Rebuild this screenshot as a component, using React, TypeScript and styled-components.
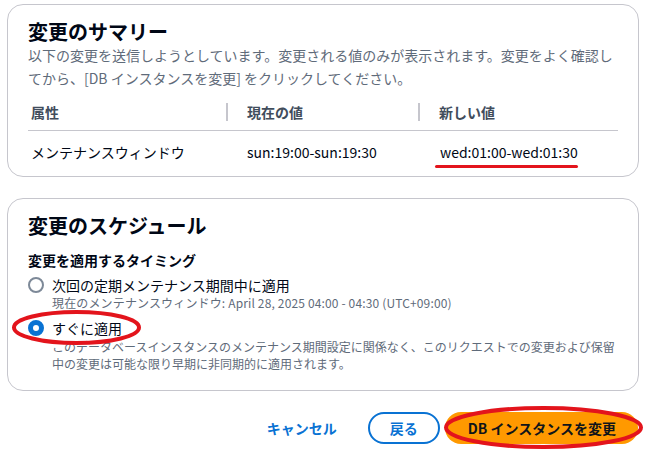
import React from "react";
import styled, { createGlobalStyle } from "styled-components";

const Global = createGlobalStyle`
  html, body { margin: 0; padding: 0; background: #ffffff; }
  body {
    font-family: "Noto Sans CJK JP", "Noto Sans", sans-serif;
    color: #000716;
    -webkit-font-smoothing: antialiased;
  }
`;

const Page = styled.div`
  width: 646px;
  height: 458px;
  box-sizing: border-box;
  padding: 4px 7px 0 7px;
  display: flex;
  flex-direction: column;
`;

const Card = styled.section<{ $gapTop?: number; $padBottom: number }>`
  border: 1px solid #c6c6cd;
  border-radius: 16px;
  padding: 14px 20px ${(p) => p.$padBottom}px 20px;
  margin-top: ${(p) => p.$gapTop ?? 0}px;
  background: #fff;
`;

const Title = styled.h2`
  margin: 0;
  font-size: 20px;
  line-height: 25px;
  font-weight: 700;
  color: #000716;
`;

const Desc = styled.p`
  margin: 0;
  font-size: 14px;
  line-height: 23px;
  color: #5f6b7a;
`;

const Table = styled.div`
  margin-top: 4px;
  display: grid;
  grid-template-columns: 198px 192px 1fr;
`;

const HeadCell = styled.div<{ $divider?: boolean }>`
  position: relative;
  height: 36px;
  display: flex;
  align-items: center;
  padding-left: ${(p) => (p.$divider ? 21 : 3)}px;
  font-size: 14px;
  font-weight: 700;
  color: #414d5c;
  border-bottom: 1px solid #c6c6cd;
  &::before {
    content: "";
    display: ${(p) => (p.$divider ? "block" : "none")};
    position: absolute;
    left: 0;
    top: 9px;
    width: 2px;
    height: 18px;
    background: #c6c6cd;
  }
`;

const Cell = styled.div<{ $indent: number }>`
  height: 42px;
  display: flex;
  align-items: center;
  padding-left: ${(p) => p.$indent}px;
  font-size: 14px;
  line-height: 20px;
  color: #000716;
`;

const Marked = styled.span`
  position: relative;
  display: inline-block;
`;

const Underline = styled.span`
  position: absolute;
  left: -5px;
  top: 23px;
  width: 143px;
  height: 3px;
  border-radius: 2px;
  background: #e3141c;
`;

const FieldLabel = styled.div`
  margin-top: 12px;
  font-size: 14px;
  line-height: 20px;
  font-weight: 700;
  color: #000716;
`;

const Options = styled.div`
  margin-top: 5px;
  display: flex;
  flex-direction: column;
`;

const Option = styled.div<{ $gapTop?: number }>`
  position: relative;
  display: grid;
  grid-template-columns: 24px 1fr;
  margin-top: ${(p) => p.$gapTop ?? 0}px;
`;

const RadioDot = styled.span<{ $checked?: boolean }>`
  margin-top: 2px;
  width: 16px;
  height: 16px;
  box-sizing: border-box;
  border-radius: 50%;
  border: ${(p) => (p.$checked ? "5px solid #0972d3" : "2px solid #7d8998")};
  background: #fff;
`;

const OptionText = styled.div`
  display: flex;
  flex-direction: column;
`;

const OptionLabel = styled.span`
  font-size: 14px;
  line-height: 20px;
  color: #000716;
`;

const OptionHint = styled.span<{ $lh: number; $ls?: number }>`
  font-size: 12px;
  line-height: ${(p) => p.$lh}px;
  letter-spacing: ${(p) => p.$ls ?? 0}px;
  color: #5f6b7a;
`;

const Ellipse = styled.svg<{ $l: number; $t: number }>`
  position: absolute;
  left: ${(p) => p.$l}px;
  top: ${(p) => p.$t}px;
  overflow: visible;
  pointer-events: none;
`;

const Actions = styled.div`
  margin-top: 21px;
  display: flex;
  justify-content: flex-end;
  align-items: center;
  gap: 5px;
  padding-right: 1px;
`;

const LinkButton = styled.button`
  border: none;
  background: transparent;
  height: 32px;
  padding: 0 20px;
  font-family: inherit;
  font-size: 14px;
  font-weight: 700;
  color: #0972d3;
  margin-right: 6px;
`;

const OutlineButton = styled.button`
  height: 32px;
  box-sizing: border-box;
  border: 2px solid #0972d3;
  border-radius: 20px;
  background: #fff;
  padding: 0 20px;
  font-family: inherit;
  font-size: 14px;
  font-weight: 700;
  color: #0972d3;
`;

const PrimaryWrap = styled.span`
  position: relative;
  display: inline-flex;
`;

const PrimaryButton = styled.button`
  height: 32px;
  box-sizing: border-box;
  border: none;
  border-radius: 20px;
  background: #ff9900;
  padding: 0 22px 0 23px;
  font-family: inherit;
  font-size: 14px;
  font-weight: 700;
  color: #0f141a;
`;

const RedRing: React.FC<{ w: number; h: number; l: number; t: number }> = ({ w, h, l, t }) => (
  <Ellipse $l={l} $t={t} width={w} height={h} viewBox={`0 0 ${w} ${h}`}>
    <ellipse
      cx={w / 2}
      cy={h / 2}
      rx={w / 2 - 2}
      ry={h / 2 - 2}
      fill="none"
      stroke="#e3141c"
      strokeWidth={4}
    />
  </Ellipse>
);

export default function App() {
  return (
    <>
      <Global />
      <Page>
        <Card $padBottom={3}>
          <Title>変更のサマリー</Title>
          <Desc>
            以下の変更を送信しようとしています。変更される値のみが表示されます。変更をよく確認してから、[DB インスタンスを変更] をクリックしてください。
          </Desc>
          <Table>
            <HeadCell>属性</HeadCell>
            <HeadCell $divider>現在の値</HeadCell>
            <HeadCell $divider>新しい値</HeadCell>
            <Cell $indent={3}>メンテナンスウィンドウ</Cell>
            <Cell $indent={21}>sun:19:00-sun:19:30</Cell>
            <Cell $indent={22}>
              <Marked>
                wed:01:00-wed:01:30
                <Underline />
              </Marked>
            </Cell>
          </Table>
        </Card>

        <Card $gapTop={21} $padBottom={18}>
          <Title>変更のスケジュール</Title>
          <FieldLabel>変更を適用するタイミング</FieldLabel>
          <Options>
            <Option>
              <RadioDot />
              <OptionText>
                <OptionLabel>次回の定期メンテナンス期間中に適用</OptionLabel>
                <OptionHint $lh={16} $ls={0.15}>
                  現在のメンテナンスウィンドウ: April 28, 2025 04:00 - 04:30 (UTC+09:00)
                </OptionHint>
              </OptionText>
            </Option>
            <Option $gapTop={7}>
              <RadioDot $checked />
              <OptionText>
                <OptionLabel>すぐに適用</OptionLabel>
                <OptionHint $lh={17}>
                  このデータベースインスタンスのメンテナンス期間設定に関係なく、このリクエストでの変更および保留中の変更は可能な限り早期に非同期的に適用されます。
                </OptionHint>
              </OptionText>
              <RedRing w={129} h={35} l={-16} t={-8} />
            </Option>
          </Options>
        </Card>

        <Actions>
          <LinkButton>キャンセル</LinkButton>
          <OutlineButton>戻る</OutlineButton>
          <PrimaryWrap>
            <PrimaryButton>DB インスタンスを変更</PrimaryButton>
            <RedRing w={199} h={43} l={-1} t={-6} />
          </PrimaryWrap>
        </Actions>
      </Page>
    </>
  );
}
